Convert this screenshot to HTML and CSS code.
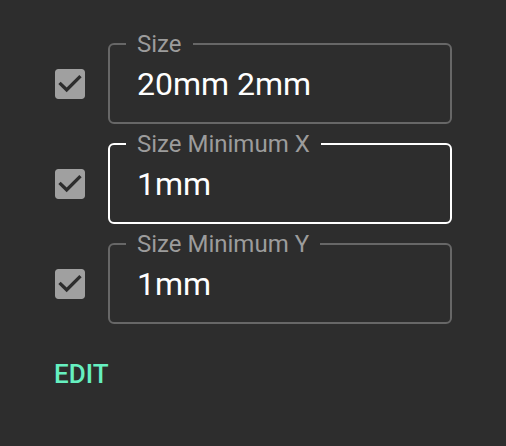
FILE: index.html
```html
<!DOCTYPE html>
<html>
<head>
<meta charset="utf-8">
<link rel="stylesheet" href="styles.css">
</head>
<body>
<div class="panel">
  <div class="row">
    <div class="check"><svg viewBox="0 0 24 24" width="40" height="40"><path d="M19 3H5c-1.11 0-2 .9-2 2v14c0 1.1.89 2 2 2h14c1.11 0 2-.9 2-2V5c0-1.1-.89-2-2-2zm-9 14l-5-5 1.41-1.41L10 14.17l7.59-7.59L19 8l-9 9z"/></svg></div>
    <fieldset class="field"><legend>Size</legend><div class="value">20mm 2mm</div></fieldset>
  </div>
  <div class="row">
    <div class="check"><svg viewBox="0 0 24 24" width="40" height="40"><path d="M19 3H5c-1.11 0-2 .9-2 2v14c0 1.1.89 2 2 2h14c1.11 0 2-.9 2-2V5c0-1.1-.89-2-2-2zm-9 14l-5-5 1.41-1.41L10 14.17l7.59-7.59L19 8l-9 9z"/></svg></div>
    <fieldset class="field focused"><legend>Size Minimum X</legend><div class="value">1mm</div></fieldset>
  </div>
  <div class="row">
    <div class="check"><svg viewBox="0 0 24 24" width="40" height="40"><path d="M19 3H5c-1.11 0-2 .9-2 2v14c0 1.1.89 2 2 2h14c1.11 0 2-.9 2-2V5c0-1.1-.89-2-2-2zm-9 14l-5-5 1.41-1.41L10 14.17l7.59-7.59L19 8l-9 9z"/></svg></div>
    <fieldset class="field"><legend>Size Minimum Y</legend><div class="value">1mm</div></fieldset>
  </div>
  <div class="edit">EDIT</div>
</div>
</body>
</html>
```
FILE: styles.css
```css
html, body {
  margin: 0;
  padding: 0;
  background: #2d2d2d;
  font-family: Roboto, "Noto Sans", sans-serif;
}
body {
  width: 506px;
  height: 446px;
  overflow: hidden;
}
.panel {
  padding: 32px 0 0 50px;
  display: flex;
  flex-direction: column;
}
.row {
  display: flex;
  align-items: center;
  margin-bottom: 8px;
}
.check {
  padding-top: 12px;
  width: 40px;
  height: 40px;
  margin-right: 18px;
}
.check svg {
  display: block;
  fill: #a0a0a0;
}
.field {
  margin: 0;
  padding: 9px 0 19px 27px;
  width: 344px;
  box-sizing: border-box;
  border: 2px solid #676767;
  border-radius: 6px;
  min-width: 0;
}
.field.focused {
  border-color: #ffffff;
}
.field legend {
  margin-left: -11px;
  padding: 0 11px;
  font-size: 24px;
  line-height: 24px;
  color: #9c9c9c;
}
.value {
  font-size: 32px;
  line-height: 38px;
  color: #ffffff;
}
.edit {
  margin-top: 29px;
  margin-left: 4px;
  font-size: 26px;
  line-height: 26px;
  font-weight: 500;
  color: #66f0c0;
}
```
